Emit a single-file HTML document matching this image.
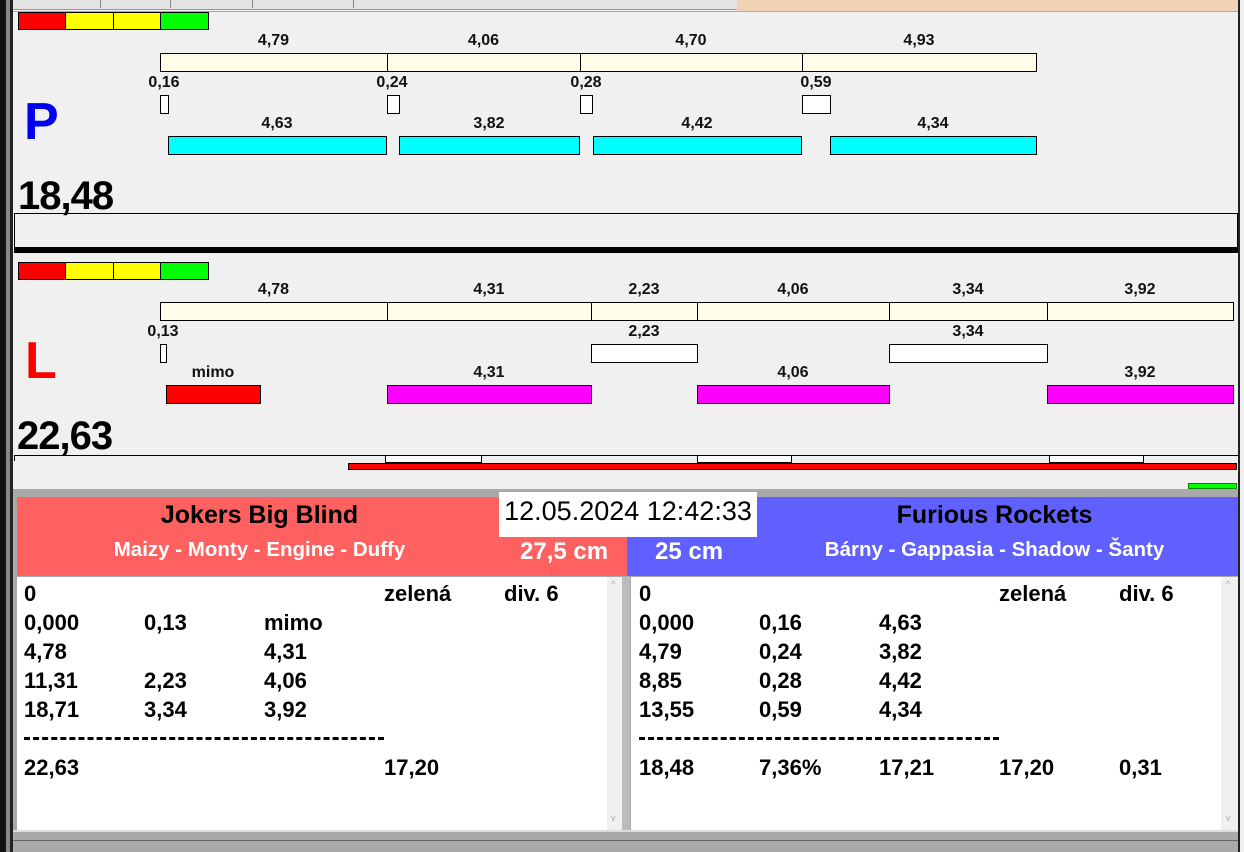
<!DOCTYPE html>
<html><head><meta charset="utf-8">
<style>
*{margin:0;padding:0;box-sizing:border-box}
body{width:1244px;height:852px;position:relative;overflow:hidden;background:#f0f0f0;font-family:"Liberation Sans",Arial,sans-serif}
div{position:absolute}
.b{border:1px solid #000}
.cr{background:#fffde8}
.cy{background:#00ffff}
.mg{background:#ff00ff}
.w{background:#fff}
.lb{font-size:16px;font-weight:bold;text-align:center;color:#111;line-height:18px}
.big{font-size:40px;font-weight:bold;color:#000;letter-spacing:-1px}
.t{font-size:22px;font-weight:bold;color:#000;line-height:29px;white-space:pre}
</style></head><body>
<!-- left frame -->
<div style="left:0;top:0;width:6px;height:852px;background:#111"></div>
<div style="left:6px;top:0;width:4px;height:852px;background:#888"></div>
<div style="left:10px;top:0;width:3px;height:852px;background:#222"></div>
<div style="left:1238px;top:0;width:2px;height:852px;background:#222"></div>
<!-- top tabs -->
<div style="left:13px;top:0;width:724px;height:10px;background:#e4e4e4;border-bottom:1px solid #999"></div>
<div style="left:100px;top:0;width:1px;height:8px;background:#888"></div>
<div style="left:170px;top:0;width:1px;height:8px;background:#888"></div>
<div style="left:252px;top:0;width:1px;height:8px;background:#888"></div>
<div style="left:353px;top:0;width:1px;height:8px;background:#888"></div>
<div style="left:737px;top:0;width:501px;height:11px;background:#f0d2b4"></div>
<div style="left:13px;top:11px;width:1225px;height:1px;background:#aaa"></div>

<!-- P section -->
<div class="b" style="left:18px;top:12px;width:48px;height:18px;background:#f00"></div>
<div class="b" style="left:65px;top:12px;width:49px;height:18px;background:#ff0"></div>
<div class="b" style="left:113px;top:12px;width:48px;height:18px;background:#ff0"></div>
<div class="b" style="left:160px;top:12px;width:49px;height:18px;background:#0f0"></div>

<div class="lb" style="left:160px;top:32px;width:227px">4,79</div>
<div class="lb" style="left:387px;top:32px;width:193px">4,06</div>
<div class="lb" style="left:580px;top:32px;width:222px">4,70</div>
<div class="lb" style="left:802px;top:32px;width:234px">4,93</div>
<div class="b cr" style="left:160px;top:53px;width:228px;height:19px"></div>
<div class="b cr" style="left:387px;top:53px;width:194px;height:19px"></div>
<div class="b cr" style="left:580px;top:53px;width:223px;height:19px"></div>
<div class="b cr" style="left:802px;top:53px;width:235px;height:19px"></div>

<div class="lb" style="left:134px;top:74px;width:60px">0,16</div>
<div class="lb" style="left:362px;top:74px;width:60px">0,24</div>
<div class="lb" style="left:556px;top:74px;width:60px">0,28</div>
<div class="lb" style="left:786px;top:74px;width:60px">0,59</div>
<div class="b w" style="left:160px;top:95px;width:9px;height:19px"></div>
<div class="b w" style="left:387px;top:95px;width:13px;height:19px"></div>
<div class="b w" style="left:580px;top:95px;width:13px;height:19px"></div>
<div class="b w" style="left:802px;top:95px;width:29px;height:19px"></div>

<div class="lb" style="left:168px;top:115px;width:218px">4,63</div>
<div class="lb" style="left:399px;top:115px;width:180px">3,82</div>
<div class="lb" style="left:593px;top:115px;width:208px">4,42</div>
<div class="lb" style="left:830px;top:115px;width:206px">4,34</div>
<div class="b cy" style="left:168px;top:136px;width:219px;height:19px"></div>
<div class="b cy" style="left:399px;top:136px;width:181px;height:19px"></div>
<div class="b cy" style="left:593px;top:136px;width:209px;height:19px"></div>
<div class="b cy" style="left:830px;top:136px;width:207px;height:19px"></div>

<div style="left:24px;top:92px;font-size:52px;font-weight:bold;color:#0000ee;line-height:60px">P</div>
<div class="big" style="left:18px;top:175px;line-height:42px">18,48</div>
<div style="left:14px;top:213px;width:1224px;height:35px;border:1px solid #000"></div>
<div style="left:14px;top:247px;width:1224px;height:6px;background:#000"></div>

<!-- L section -->
<div class="b" style="left:18px;top:262px;width:48px;height:18px;background:#f00"></div>
<div class="b" style="left:65px;top:262px;width:49px;height:18px;background:#ff0"></div>
<div class="b" style="left:113px;top:262px;width:48px;height:18px;background:#ff0"></div>
<div class="b" style="left:160px;top:262px;width:49px;height:18px;background:#0f0"></div>

<div class="lb" style="left:160px;top:281px;width:227px">4,78</div>
<div class="lb" style="left:387px;top:281px;width:204px">4,31</div>
<div class="lb" style="left:591px;top:281px;width:106px">2,23</div>
<div class="lb" style="left:697px;top:281px;width:192px">4,06</div>
<div class="lb" style="left:889px;top:281px;width:158px">3,34</div>
<div class="lb" style="left:1047px;top:281px;width:186px">3,92</div>
<div class="b cr" style="left:160px;top:302px;width:228px;height:19px"></div>
<div class="b cr" style="left:387px;top:302px;width:205px;height:19px"></div>
<div class="b cr" style="left:591px;top:302px;width:107px;height:19px"></div>
<div class="b cr" style="left:697px;top:302px;width:193px;height:19px"></div>
<div class="b cr" style="left:889px;top:302px;width:159px;height:19px"></div>
<div class="b cr" style="left:1047px;top:302px;width:187px;height:19px"></div>

<div class="lb" style="left:133px;top:323px;width:60px">0,13</div>
<div class="lb" style="left:591px;top:323px;width:106px">2,23</div>
<div class="lb" style="left:889px;top:323px;width:158px">3,34</div>
<div class="b w" style="left:160px;top:344px;width:7px;height:19px"></div>
<div class="b w" style="left:591px;top:344px;width:107px;height:19px"></div>
<div class="b w" style="left:889px;top:344px;width:159px;height:19px"></div>

<div class="lb" style="left:166px;top:364px;width:94px">mimo</div>
<div class="lb" style="left:387px;top:364px;width:204px">4,31</div>
<div class="lb" style="left:697px;top:364px;width:192px">4,06</div>
<div class="lb" style="left:1047px;top:364px;width:186px">3,92</div>
<div class="b" style="left:166px;top:385px;width:95px;height:19px;background:#f00"></div>
<div class="b mg" style="left:387px;top:385px;width:205px;height:19px"></div>
<div class="b mg" style="left:697px;top:385px;width:193px;height:19px"></div>
<div class="b mg" style="left:1047px;top:385px;width:187px;height:19px"></div>

<div style="left:25px;top:331px;font-size:52px;font-weight:bold;color:#f00;line-height:60px">L</div>
<div class="big" style="left:17px;top:415px;line-height:42px">22,63</div>
<div style="left:14px;top:455px;width:1224px;height:1px;background:#000"></div>
<div style="left:14px;top:455px;width:1px;height:6px;background:#000"></div>
<div class="b w" style="left:385px;top:455px;width:97px;height:8px"></div>
<div class="b w" style="left:697px;top:455px;width:95px;height:8px"></div>
<div class="b w" style="left:1049px;top:455px;width:95px;height:8px"></div>
<div class="b" style="left:348px;top:463px;width:889px;height:7px;background:#f00"></div>
<div class="b" style="left:1188px;top:483px;width:49px;height:6px;background:#0f0;border-color:#080"></div>

<!-- bottom area -->
<div style="left:13px;top:489px;width:1225px;height:363px;background:#a9a9a9"></div>
<div style="left:17px;top:497px;width:610px;height:79px;background:#ff6060"></div>
<div style="left:627px;top:497px;width:611px;height:79px;background:#6060ff"></div>
<div style="left:17px;top:501px;width:485px;text-align:center;font-size:25px;font-weight:bold;color:#000">Jokers Big Blind</div>
<div style="left:17px;top:538px;width:485px;text-align:center;font-size:20.5px;font-weight:bold;color:#fff">Maizy - Monty - Engine - Duffy</div>
<div style="left:520px;top:538px;font-size:24px;font-weight:bold;color:#fff">27,5 cm</div>
<div style="left:655px;top:538px;font-size:24px;font-weight:bold;color:#fff">25 cm</div>
<div style="left:757px;top:501px;width:475px;text-align:center;font-size:25px;font-weight:bold;color:#000">Furious Rockets</div>
<div style="left:757px;top:538px;width:475px;text-align:center;font-size:20.5px;font-weight:bold;color:#fff">Bárny - Gappasia - Shadow - Šanty</div>
<div style="left:499px;top:492px;width:258px;height:45px;background:#fff;font-size:27px;color:#000;text-align:center;line-height:38px">12.05.2024 12:42:33</div>

<!-- lists -->
<div style="left:17px;top:577px;width:590px;height:253px;background:#fff"></div>
<div style="left:607px;top:577px;width:15px;height:253px;background:#f0f0f0;font-size:9px;color:#aaa;text-align:center"><span style="position:absolute;top:2px;left:4px">^</span><span style="position:absolute;top:236px;left:4px">v</span></div>
<div style="left:622px;top:577px;width:8px;height:253px;background:#bbb"></div>
<div style="left:631px;top:577px;width:590px;height:253px;background:#fff"></div>
<div style="left:1221px;top:577px;width:17px;height:253px;background:#f0f0f0;font-size:9px;color:#aaa;text-align:center"><span style="position:absolute;top:2px;left:5px">^</span><span style="position:absolute;top:236px;left:5px">v</span></div>

<div class="t" style="left:24px;top:579px">0</div>
<div class="t" style="left:384px;top:579px">zelená</div>
<div class="t" style="left:504px;top:579px">div. 6</div>
<div class="t" style="left:24px;top:608px">0,000</div><div class="t" style="left:144px;top:608px">0,13</div><div class="t" style="left:264px;top:608px">mimo</div>
<div class="t" style="left:24px;top:637px">4,78</div><div class="t" style="left:264px;top:637px">4,31</div>
<div class="t" style="left:24px;top:666px">11,31</div><div class="t" style="left:144px;top:666px">2,23</div><div class="t" style="left:264px;top:666px">4,06</div>
<div class="t" style="left:24px;top:695px">18,71</div><div class="t" style="left:144px;top:695px">3,34</div><div class="t" style="left:264px;top:695px">3,92</div>
<div style="left:24px;top:737px;width:360px;height:3px;border-top:3px dashed #000"></div>
<div class="t" style="left:24px;top:753px">22,63</div><div class="t" style="left:384px;top:753px">17,20</div>

<div class="t" style="left:639px;top:579px">0</div>
<div class="t" style="left:999px;top:579px">zelená</div>
<div class="t" style="left:1119px;top:579px">div. 6</div>
<div class="t" style="left:639px;top:608px">0,000</div><div class="t" style="left:759px;top:608px">0,16</div><div class="t" style="left:879px;top:608px">4,63</div>
<div class="t" style="left:639px;top:637px">4,79</div><div class="t" style="left:759px;top:637px">0,24</div><div class="t" style="left:879px;top:637px">3,82</div>
<div class="t" style="left:639px;top:666px">8,85</div><div class="t" style="left:759px;top:666px">0,28</div><div class="t" style="left:879px;top:666px">4,42</div>
<div class="t" style="left:639px;top:695px">13,55</div><div class="t" style="left:759px;top:695px">0,59</div><div class="t" style="left:879px;top:695px">4,34</div>
<div style="left:639px;top:737px;width:360px;height:3px;border-top:3px dashed #000"></div>
<div class="t" style="left:639px;top:753px">18,48</div><div class="t" style="left:759px;top:753px">7,36%</div><div class="t" style="left:879px;top:753px">17,21</div><div class="t" style="left:999px;top:753px">17,20</div><div class="t" style="left:1119px;top:753px">0,31</div>

<div style="left:13px;top:830px;width:1225px;height:2px;background:#ddd"></div>
<div style="left:13px;top:840px;width:1225px;height:1px;background:#666"></div>
</body></html>
